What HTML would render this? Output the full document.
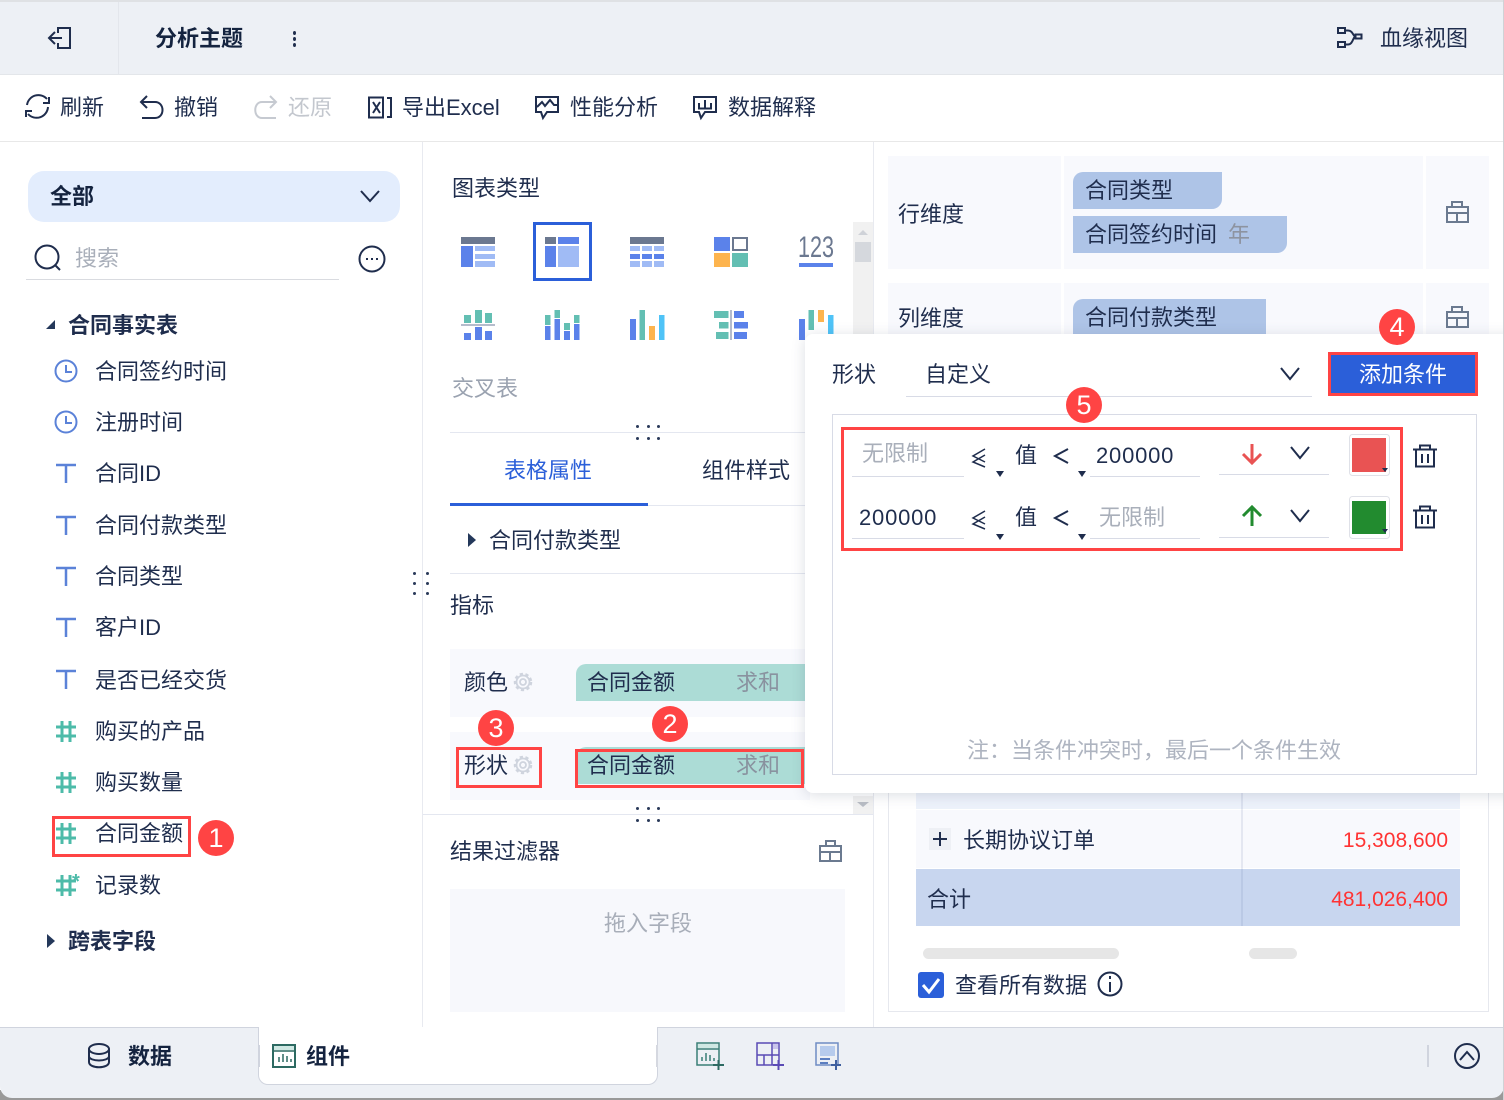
<!DOCTYPE html>
<html lang="zh-CN">
<head>
<meta charset="utf-8">
<title>分析主题</title>
<style>
html,body{margin:0;padding:0;background:#fff}
#p{position:relative;width:1504px;height:1100px;overflow:hidden;background:#fff;font-family:"Liberation Sans","Noto Sans CJK SC",sans-serif}
.t{position:absolute;white-space:nowrap;line-height:30px;height:30px;font-size:22px;color:#1f2d4d;margin-top:1px}
.b{font-weight:700;color:#14233f}
.g{color:#a9afba}
.r{position:absolute}
.rb{position:absolute;border:3px solid #ff4444;box-sizing:border-box}
.c{position:absolute;width:36px;height:36px;border-radius:50%;background:#ff4444;color:#fff;font-size:27px;line-height:36px;text-align:center}
svg{position:absolute;overflow:visible}
.d{position:absolute;width:3px;height:3px;background:#2a3a5a;border-radius:50%}
.l{fill:none;stroke:#1f2d4d;stroke-width:2}
</style>
</head>
<body>
<div id="p">

<!-- header -->
<div class="r" style="left:0;top:0;width:1504px;height:75px;background:#edf0f5;border-top:2px solid #dfe1e4;border-bottom:1px solid #e3e6ea;box-sizing:border-box"></div>
<div class="r" style="left:118px;top:2px;width:1px;height:72px;background:#e3e6ec"></div>
<svg style="left:0;top:0" width="100" height="75" class="l"><path d="M58 33V28H70V48H58V43M62 38H49M55 32L49 38L55 44"/></svg>
<div class="t b" style="left:155px;top:23px">分析主题</div>
<div class="r" style="left:293px;top:31px;width:3px;height:4px;background:#1f2d4d;border-radius:50%"></div>
<div class="r" style="left:293px;top:37px;width:3px;height:4px;background:#1f2d4d;border-radius:50%"></div>
<div class="r" style="left:293px;top:43px;width:3px;height:4px;background:#1f2d4d;border-radius:50%"></div>
<svg style="left:0;top:0" width="1504" height="75" class="l"><rect x="1338" y="28" width="7" height="5"/><rect x="1338" y="42" width="7" height="5"/><rect x="1355.500" y="34.500" width="6" height="4"/><path d="M1345 30.500H1348C1353 30.500 1353 36.500 1355.500 36.500M1345 44.500H1348C1353 44.500 1353 36.500 1355.500 36.500"/></svg>
<div class="t" style="left:1380px;top:23px">血缘视图</div>

<!-- toolbar -->
<div class="r" style="left:0;top:141px;width:1504px;height:1px;background:#e8e8e8"></div>
<svg style="left:0;top:75px" width="1504" height="66" class="l">
<path d="M27 30A11.500 11.500 0 0 1 47 24M48 32A11.500 11.500 0 0 1 28 39"/><path d="M49 22V28H43M26 42V36H32"/>
<path d="M147 21L141 27L147 33M141 27H155C165 27 165 43 155 43H142"/>
<g style="stroke:#c6cad1"><path d="M270 21L276 27L270 33M276 27H262C253 27 253 43 262 43H276" /></g>
<rect x="369" y="22.500" width="14" height="20"/><path d="M373 27L380 38M380 27L373 38M387 23H391V42H387"/>
<path d="M536 22H558V37H547L543 43L541 37H536ZM537 32L542 27L545 31L550 25L554 30H558"/>
<path d="M694 22H716V37H705L701 43L699 37H694ZM699 28V33M705 25V33M711 28V33M698 33.500H712"/>
</svg>
<div class="t" style="left:60px;top:92px">刷新</div>
<div class="t" style="left:174px;top:92px">撤销</div>
<div class="t" style="left:288px;top:92px;color:#c3c7ce">还原</div>
<div class="t" style="left:402px;top:92px">导出Excel</div>
<div class="t" style="left:570px;top:92px">性能分析</div>
<div class="t" style="left:728px;top:92px">数据解释</div>

<!-- left panel -->
<div class="r" style="left:422px;top:142px;width:1px;height:885px;background:#e8eaf0"></div>
<div class="r" style="left:28px;top:171px;width:372px;height:51px;background:#e3edfd;border-radius:16px"></div>
<div class="t b" style="left:50px;top:181px">全部</div>
<svg style="left:0;top:0" width="422" height="300" class="l"><path d="M361 191L370 201L379 191"/><circle cx="47" cy="257" r="11.500"/><path d="M55 265L60 270"/><circle cx="372" cy="259" r="12.500"/></svg>
<div class="r" style="left:366px;top:258px;width:2px;height:2px;background:#1f2d4d"></div>
<div class="r" style="left:371px;top:258px;width:2px;height:2px;background:#1f2d4d"></div>
<div class="r" style="left:376px;top:258px;width:2px;height:2px;background:#1f2d4d"></div>
<div class="t g" style="left:75px;top:243px">搜索</div>
<div class="r" style="left:26px;top:279px;width:313px;height:1px;background:#d9dbe0"></div>

<svg style="left:0;top:0" width="422" height="1000">
<path d="M55 320V329H46Z" fill="#24385a"/>
<path d="M47 934L55 941L47 948Z" fill="#24385a"/>
<g fill="none" stroke="#5b82d8" stroke-width="2">
<circle cx="66" cy="371" r="10.500"/><path d="M66 365V372H72"/>
<circle cx="66" cy="422" r="10.500"/><path d="M66 416V423H72"/>
</g>
<g fill="none" stroke="#5b82d8" stroke-width="2.500">
<path d="M56 465H76M66 465V483M56 517H76M66 517V535M56 568H76M66 568V586M56 619H76M66 619V637M56 671H76M66 671V689"/>
</g>
<g fill="none" stroke="#4dbba9" stroke-width="3">
<path d="M56 727H76M56 736H76M62 721V742M70 721V742"/>
<path d="M56 778H76M56 787H76M62 772V793M70 772V793"/>
<path d="M56 829H76M56 838H76M62 823V844M70 823V844"/>
<path d="M56 881H76M56 890H76M62 875V896M70 875V896"/>
</g>
<text x="72" y="888" font-size="20" font-weight="700" fill="#4dbba9" font-family="Liberation Sans">*</text>
</svg>
<div class="t b" style="left:68px;top:310px;color:#1f2d4d">合同事实表</div>
<div class="t" style="left:95px;top:356px">合同签约时间</div>
<div class="t" style="left:95px;top:407px">注册时间</div>
<div class="t" style="left:95px;top:458px">合同ID</div>
<div class="t" style="left:95px;top:510px">合同付款类型</div>
<div class="t" style="left:95px;top:561px">合同类型</div>
<div class="t" style="left:95px;top:612px">客户ID</div>
<div class="t" style="left:95px;top:665px">是否已经交货</div>
<div class="t" style="left:95px;top:716px">购买的产品</div>
<div class="t" style="left:95px;top:767px">购买数量</div>
<div class="t" style="left:95px;top:818px">合同金额</div>
<div class="t" style="left:95px;top:870px">记录数</div>
<div class="t b" style="left:68px;top:926px;color:#1f2d4d">跨表字段</div>
<div class="rb" style="left:52px;top:816px;width:139px;height:41px"></div>
<div class="c" style="left:198px;top:820px">1</div>

<div class="d" style="left:413px;top:572px"></div><div class="d" style="left:426px;top:572px"></div>
<div class="d" style="left:413px;top:582px"></div><div class="d" style="left:426px;top:582px"></div>
<div class="d" style="left:413px;top:592px"></div><div class="d" style="left:426px;top:592px"></div>

<!-- middle panel -->
<div class="r" style="left:873px;top:142px;width:1px;height:885px;background:#e8eaf0"></div>
<div class="t" style="left:452px;top:173px">图表类型</div>
<div class="r" style="left:533px;top:222px;width:59px;height:59px;border:3px solid #2b5fd9;box-sizing:border-box"></div>
<svg style="left:0;top:0" width="900" height="345">
<g fill="#6b7890"><rect x="461" y="237" width="34" height="7"/><rect x="545" y="237" width="11" height="7"/><rect x="630" y="237" width="34" height="7"/></g>
<g fill="#5b82ea">
<rect x="461" y="246" width="12" height="21"/><rect x="558" y="237" width="21" height="7"/><rect x="545" y="246" width="11" height="21"/>
<rect x="630" y="254" width="10" height="5"/><rect x="642" y="254" width="10" height="5"/><rect x="654" y="254" width="10" height="5"/>
<rect x="714" y="237" width="16" height="14"/><rect x="799" y="263" width="34" height="4"/>
<rect x="464" y="333" width="7" height="7"/><rect x="475" y="327" width="7" height="13"/><rect x="485" y="331" width="7" height="9"/>
<rect x="545" y="326" width="5.500" height="14"/><rect x="554.500" y="319" width="5.500" height="21"/><rect x="564" y="331" width="6" height="9"/><rect x="574" y="324" width="5.500" height="16"/>
<rect x="630" y="319" width="6" height="21"/>
<rect x="734" y="311" width="10" height="7"/><rect x="734" y="322" width="14" height="6.500"/><rect x="734" y="332" width="13" height="7"/>
<rect x="799" y="319" width="6" height="21"/>
</g>
<g fill="#a0bbf5">
<rect x="475" y="246" width="20" height="5"/><rect x="475" y="254" width="20" height="5"/><rect x="475" y="261" width="20" height="6"/>
<rect x="558" y="246" width="21" height="21"/>
<rect x="630" y="246" width="10" height="5"/><rect x="642" y="246" width="10" height="5"/><rect x="654" y="246" width="10" height="5"/>
<rect x="630" y="261" width="10" height="6"/><rect x="642" y="261" width="10" height="6"/><rect x="654" y="261" width="10" height="6"/>
</g>
<g fill="#63bfb3">
<rect x="732" y="253" width="16" height="14"/>
<rect x="464" y="315" width="7" height="8"/><rect x="475" y="310" width="7" height="13"/><rect x="485" y="313" width="7" height="10"/>
<rect x="545" y="315" width="5.500" height="10"/><rect x="554.500" y="310" width="5.500" height="8"/><rect x="564" y="323" width="6" height="7"/><rect x="574" y="315" width="5.500" height="8"/>
<rect x="639.500" y="310" width="5.500" height="30"/>
<rect x="714" y="311" width="14.500" height="7"/><rect x="719" y="322" width="9.500" height="6.500"/><rect x="716" y="332" width="12.500" height="7"/>
<rect x="808.500" y="310" width="5.500" height="20"/>
</g>
<g fill="#fdb44e"><rect x="714" y="253" width="16" height="14"/><rect x="649" y="326" width="6" height="14"/><rect x="818" y="310" width="6" height="12"/></g>
<g fill="#4fc3f7"><rect x="659" y="315" width="5.500" height="25"/><rect x="828" y="315" width="5.500" height="20"/></g>
<rect x="733" y="238" width="14" height="12" fill="#fff" stroke="#6b7890" stroke-width="2"/>
<rect x="461" y="324" width="34" height="2" fill="#b5bccc"/><rect x="730" y="310" width="2" height="30" fill="#b5bccc"/>
<text x="798" y="257" font-size="30" fill="#6b7890" textLength="36" lengthAdjust="spacingAndGlyphs" font-family="Liberation Sans">123</text>
</svg>
<div class="t" style="left:452px;top:373px;color:#9aa2b0">交叉表</div>

<div class="r" style="left:853px;top:222px;width:20px;height:112px;background:#f1f1f1"></div>
<div class="r" style="left:855px;top:242px;width:16px;height:20px;background:#d5d8dd"></div>
<div class="r" style="left:853px;top:796px;width:20px;height:18px;background:#f1f1f1"></div>
<svg style="left:0;top:0" width="900" height="820"><path d="M858 235L863 230L868 235Z" fill="#cfd2d8"/><path d="M857 802H869L863 807Z" fill="#b9bdc5"/></svg>

<div class="r" style="left:450px;top:432px;width:360px;height:1px;background:#e4e7f0"></div>
<div class="d" style="left:636px;top:425px"></div><div class="d" style="left:647px;top:425px"></div><div class="d" style="left:657px;top:425px"></div>
<div class="d" style="left:636px;top:437px"></div><div class="d" style="left:647px;top:437px"></div><div class="d" style="left:657px;top:437px"></div>
<div class="t" style="left:504px;top:455px;color:#2b5fd9">表格属性</div>
<div class="t" style="left:702px;top:455px">组件样式</div>
<div class="r" style="left:450px;top:505px;width:360px;height:1px;background:#e4e7f0"></div>
<div class="r" style="left:450px;top:503px;width:198px;height:3px;background:#2b5fd9"></div>
<svg style="left:0;top:0" width="500" height="560"><path d="M468 533L476 540L468 547Z" fill="#24385a"/></svg>
<div class="t" style="left:489px;top:525px">合同付款类型</div>
<div class="r" style="left:450px;top:573px;width:360px;height:1px;background:#e4e7f0"></div>
<div class="t" style="left:450px;top:590px">指标</div>

<div class="r" style="left:450px;top:649px;width:360px;height:68px;background:#f8f9fd"></div>
<div class="r" style="left:450px;top:732px;width:360px;height:68px;background:#f8f9fd"></div>
<div class="t" style="left:464px;top:667px">颜色</div>
<div class="t" style="left:464px;top:750px">形状</div>
<svg style="left:0;top:0" width="560" height="800" fill="none" stroke="#cfd4de">
<g stroke-width="1.800"><circle cx="523" cy="682" r="3"/><circle cx="523" cy="765" r="3"/><circle cx="523" cy="682" r="6.500"/><circle cx="523" cy="765" r="6.500"/></g>
<g stroke-width="2.500" stroke-dasharray="3.200 2.500"><circle cx="523" cy="682" r="8"/><circle cx="523" cy="765" r="8"/></g>
</svg>
<div class="r" style="left:576px;top:664px;width:240px;height:37px;background:#acdcd6;border-top-left-radius:10px"></div>
<div class="t" style="left:587px;top:667px">合同金额</div>
<div class="t" style="left:736px;top:667px;color:#89929f">求和</div>
<div class="r" style="left:576px;top:747px;width:240px;height:37px;background:#acdcd6;border-top-left-radius:10px"></div>
<div class="t" style="left:587px;top:750px">合同金额</div>
<div class="t" style="left:736px;top:750px;color:#89929f">求和</div>

<div class="r" style="left:423px;top:814px;width:450px;height:1px;background:#e4e7f0"></div>
<div class="d" style="left:636px;top:807px"></div><div class="d" style="left:647px;top:807px"></div><div class="d" style="left:657px;top:807px"></div>
<div class="d" style="left:636px;top:819px"></div><div class="d" style="left:647px;top:819px"></div><div class="d" style="left:657px;top:819px"></div>
<div class="t" style="left:450px;top:836px">结果过滤器</div>
<svg style="left:0;top:0" width="900" height="870" fill="none" stroke="#6b7a90" stroke-width="2"><path d="M820 846H841V861H820ZM826 846V841H835V846M820 852H841M830 852V861"/></svg>
<div class="r" style="left:450px;top:889px;width:395px;height:123px;background:#f7f8fc"></div>
<div class="t" style="left:604px;top:908px;color:#a8aeb9">拖入字段</div>

<!-- right panel -->
<div class="r" style="left:888px;top:156px;width:173px;height:113px;background:#f8f9fd"></div>
<div class="r" style="left:1064px;top:156px;width:359px;height:113px;background:#f8f9fd"></div>
<div class="r" style="left:1426px;top:156px;width:63px;height:113px;background:#f8f9fd"></div>
<div class="r" style="left:888px;top:283px;width:173px;height:60px;background:#f8f9fd"></div>
<div class="r" style="left:1064px;top:283px;width:359px;height:60px;background:#f8f9fd"></div>
<div class="r" style="left:1426px;top:283px;width:63px;height:60px;background:#f8f9fd"></div>
<div class="t" style="left:898px;top:199px">行维度</div>
<div class="t" style="left:898px;top:303px">列维度</div>
<div class="r" style="left:1073px;top:172px;width:149px;height:37px;background:#aec4e7;border-radius:10px 0 10px 0"></div>
<div class="r" style="left:1073px;top:216px;width:214px;height:37px;background:#aec4e7;border-radius:0 0 10px 0"></div>
<div class="r" style="left:1073px;top:299px;width:193px;height:48px;background:#aec4e7;border-radius:10px 0 10px 0"></div>
<div class="t" style="left:1085px;top:175px">合同类型</div>
<div class="t" style="left:1085px;top:219px">合同签约时间</div>
<div class="t" style="left:1228px;top:219px;color:#8d93a0">年</div>
<div class="t" style="left:1085px;top:302px">合同付款类型</div>
<svg style="left:0;top:0" width="1504" height="340" fill="none" stroke="#6b7a90" stroke-width="2"><path d="M1447 207H1468V222H1447ZM1452 207V202H1462V207M1447 213H1468M1457 213V222"/><path d="M1447 312H1468V327H1447ZM1452 312V307H1462V312M1447 318H1468M1457 318V327"/></svg>

<div class="r" style="left:888px;top:780px;width:601px;height:232px;border:1px solid #e6e8ee;box-sizing:border-box"></div>
<div class="r" style="left:916px;top:780px;width:544px;height:29px;background:#edf2fb"></div>
<div class="r" style="left:916px;top:810px;width:544px;height:58px;background:#f8f9fd"></div>
<div class="r" style="left:916px;top:869px;width:544px;height:57px;background:#c8d6ef"></div>
<div class="r" style="left:1241px;top:780px;width:2px;height:146px;background:rgba(90,110,160,.12)"></div>
<div class="r" style="left:929px;top:828px;width:22px;height:22px;background:#eef0f5"></div>
<svg style="left:0;top:0" width="1504" height="1010">
<path d="M933 839H947M940 832V846" stroke="#1f2d4d" stroke-width="2" fill="none"/>
</svg>
<div class="t" style="left:963px;top:825px">长期协议订单</div>
<div class="t" style="left:1248px;width:200px;top:825px;text-align:right;color:#f33;font-size:21px">15,308,600</div>
<div class="t" style="left:927px;top:884px">合计</div>
<div class="t" style="left:1248px;width:200px;top:884px;text-align:right;color:#f33;font-size:21px">481,026,400</div>
<div class="r" style="left:923px;top:948px;width:196px;height:11px;background:#e6e6e6;border-radius:6px"></div>
<div class="r" style="left:1249px;top:948px;width:48px;height:11px;background:#e6e6e6;border-radius:6px"></div>
<div class="r" style="left:918px;top:972px;width:26px;height:26px;background:#2b5fd9;border-radius:3px"></div>
<svg style="left:0;top:0" width="1504" height="1010" fill="none">
<path d="M923 985L929 992L939 979" stroke="#fff" stroke-width="3"/>
<circle cx="1110" cy="984" r="11.500" stroke="#1f2d4d" stroke-width="2"/><path d="M1110 982V992M1110 976V979" stroke="#1f2d4d" stroke-width="2"/>
</svg>
<div class="t" style="left:955px;top:970px">查看所有数据</div>

<!-- popup -->
<div class="r" style="left:805px;top:334px;width:720px;height:459px;background:#fff;border-radius:8px;box-shadow:0 2px 14px rgba(60,70,100,.18)"></div>
<div class="t" style="left:832px;top:359px">形状</div>
<div class="t" style="left:925px;top:359px">自定义</div>
<div class="r" style="left:906px;top:396px;width:406px;height:1px;background:#d8dbe6"></div>
<div class="r" style="left:1328px;top:352px;width:150px;height:44px;background:#2b5fd9;border:3px solid #ff4444;box-sizing:border-box"></div>
<div class="t" style="left:1328px;width:150px;top:359px;text-align:center;color:#fff">添加条件</div>
<div class="r" style="left:832px;top:414px;width:645px;height:361px;border:1px solid #d8dbe6;box-sizing:border-box"></div>
<div class="rb" style="left:841px;top:427px;width:562px;height:124px"></div>

<div class="t g" style="left:862px;top:438px">无限制</div>
<div class="t" style="left:1096px;top:440px;letter-spacing:.8px">200000</div>
<div class="t" style="left:859px;top:502px;letter-spacing:.8px">200000</div>
<div class="t g" style="left:1099px;top:502px">无限制</div>
<div class="t" style="left:1015px;top:440px">值</div>
<div class="t" style="left:1015px;top:502px">值</div>

<svg style="left:0;top:0" width="1504" height="560">
<g fill="#d8dbe6">
<rect x="852" y="476" width="112" height="1"/><rect x="1090" y="476" width="110" height="1"/><rect x="1219" y="474" width="110" height="1"/>
<rect x="852" y="538" width="112" height="1"/><rect x="1090" y="538" width="110" height="1"/><rect x="1219" y="537" width="110" height="1"/>
</g>
<g fill="none" stroke="#1f2d4d" stroke-width="2">
<path d="M1281 368L1290 379L1299 368"/>
<path d="M985 449L973 456L985 462M985 455L973 462L985 467" stroke-width="1.500"/><path d="M1068 449L1055 456L1068 463"/>
<path d="M985 511L973 518L985 524M985 517L973 524L985 529" stroke-width="1.500"/><path d="M1068 511L1055 518L1068 525"/>
<path d="M1291 447L1300 458L1309 447"/><path d="M1291 510L1300 521L1309 510"/>
<path d="M1413 449.500H1437M1420 449V445.500H1430V449M1416 449.500V466.500H1434V449.500M1422 454V463M1428 454V463"/>
<path d="M1413 510.500H1437M1420 510V506.500H1430V510M1416 510.500V527.500H1434V510.500M1422 515V524M1428 515V524"/>
</g>
<g fill="#1f2d4d">
<path d="M996 471H1004L1000 477Z"/><path d="M1078 471H1086L1082 477Z"/>
<path d="M996 534H1004L1000 540Z"/><path d="M1078 534H1086L1082 540Z"/>
</g>
<g fill="none" stroke-width="3">
<path d="M1252 444V463M1243 454L1252 463L1261 454" stroke="#e95353"/>
<path d="M1252 526V507M1243 516L1252 507L1261 516" stroke="#228b2f"/>
</g>
<rect x="1349.500" y="434.500" width="40" height="41" rx="3" fill="#fff" stroke="#dfe1e8"/>
<rect x="1352" y="438" width="34" height="34" fill="#e95353"/>
<rect x="1349.500" y="496.500" width="40" height="42" rx="3" fill="#fff" stroke="#dfe1e8"/>
<rect x="1352" y="501" width="34" height="33" fill="#228b2f"/>
<path d="M1382 468H1388L1385 472Z" fill="#1f2d4d"/><path d="M1382 529H1388L1385 533Z" fill="#1f2d4d"/>
</svg>
<div class="t" style="left:967px;top:735px;color:#aeb4c0">注：当条件冲突时，最后一个条件生效</div>

<!-- badges and red boxes -->
<div class="rb" style="left:456px;top:747px;width:86px;height:41px"></div>
<div class="rb" style="left:575px;top:749px;width:229px;height:39px"></div>
<div class="c" style="left:652px;top:706px">2</div>
<div class="c" style="left:478px;top:710px">3</div>
<div class="c" style="left:1379px;top:309px">4</div>
<div class="c" style="left:1066px;top:387px">5</div>

<!-- bottom bar -->
<div class="r" style="left:0;top:1090px;width:1504px;height:10px;background:#999"></div>
<div class="r" style="left:0;top:1027px;width:1504px;height:71px;background:#edf0f5;border-top:1px solid #d0d4de;box-sizing:border-box;border-radius:0 0 12px 12px"></div>
<div class="r" style="left:258px;top:1027px;width:400px;height:58px;background:#fff;border:1px solid #d0d4de;border-top:0;box-sizing:border-box;border-radius:0 0 10px 10px"></div>
<div class="r" style="left:258px;top:1045px;width:2px;height:22px;background:#d0d4de"></div>
<div class="r" style="left:656px;top:1045px;width:2px;height:22px;background:#d5d8e0"></div>
<div class="r" style="left:1427px;top:1045px;width:2px;height:22px;background:#d0d4de"></div>
<div class="t b" style="left:128px;top:1041px">数据</div>
<div class="t b" style="left:306px;top:1041px">组件</div>
<svg style="left:0;top:0" width="1504" height="1100" fill="none">
<g stroke="#1f2d4d" stroke-width="2"><ellipse cx="99" cy="1049" rx="10" ry="5"/><path d="M89 1049V1062C89 1069 109 1069 109 1062V1049M89 1056C89 1062 109 1062 109 1056"/></g>
<rect x="273" y="1045" width="22" height="22" stroke="#2d6a62" stroke-width="2"/><rect x="274" y="1046" width="20" height="4" fill="#cfe8e3"/><path d="M273 1051H295M279 1062V1057M283 1062V1054M287 1062V1056M291 1062V1059" stroke="#2d6a62" stroke-width="1.500"/>
<rect x="697" y="1043" width="22" height="22" stroke="#3a7f76" stroke-width="1.500"/><rect x="698" y="1044" width="20" height="4" fill="#cfe8e3"/><path d="M697 1049H719M702 1061V1057M706 1061V1053M710 1061V1055M714 1061V1058" stroke="#3a7f76" stroke-width="1.500"/><path d="M713 1065H724M718.500 1060V1070" stroke="#2d6a62" stroke-width="2"/>
<rect x="757" y="1043" width="22" height="22" stroke="#5a4ab5" stroke-width="1.500"/><path d="M772 1043V1055M757 1055H779M764 1055V1065M772 1055V1065" stroke="#5a4ab5" stroke-width="1.500"/><rect x="773" y="1044" width="5" height="5" fill="#c9c4ec"/><path d="M773 1065H784M778.500 1060V1070" stroke="#5a4ab5" stroke-width="2"/>
<rect x="816" y="1043" width="22" height="22" stroke="#6f8cc4" stroke-width="1.500"/><rect x="820" y="1046" width="15" height="10" fill="#b6cbed"/><path d="M820 1059H830M820 1063H828" stroke="#5b7ec0" stroke-width="2"/><path d="M831 1065H841M836 1060V1070" stroke="#3f5f9f" stroke-width="2"/>
<circle cx="1467" cy="1056" r="12" stroke="#1f2d4d" stroke-width="2"/><path d="M1460 1060L1467 1052L1474 1060" stroke="#1f2d4d" stroke-width="2"/>
</svg>
<div class="r" style="left:1503px;top:0;width:1px;height:1100px;background:#d0d2d6"></div>
</div>
</body>
</html>
